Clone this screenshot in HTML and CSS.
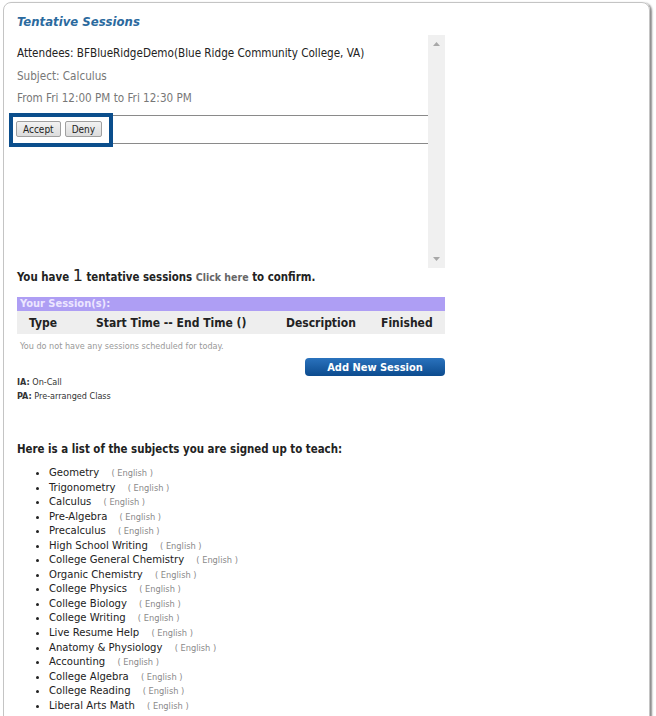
FILE: index.html
```html
<!DOCTYPE html>
<html>
<head>
<meta charset="utf-8">
<link rel="stylesheet" href="styles.css">
</head>
<body>
<div class="panel">
  <h2 class="title">Tentative Sessions</h2>
  <div class="scrollbox">
    <div class="sb-content">
      <div class="session">
        <p class="attendees">Attendees: BFBlueRidgeDemo(Blue Ridge Community College, VA)</p>
        <p class="meta">Subject: Calculus</p>
        <p class="meta">From Fri 12:00 PM to Fri 12:30 PM</p>
      </div>
      <div class="actions">
        <button class="btn">Accept</button>
        <button class="btn">Deny</button>
        <span class="highlight"></span>
      </div>
    </div>
    <div class="scrollbar">
      <svg class="arrow" width="7" height="4" viewBox="0 0 7 4"><path d="M0 4 L3.5 0 L7 4 Z" fill="#a8a8a8"/></svg>
      <svg class="arrow" width="7" height="4" viewBox="0 0 7 4"><path d="M0 0 L3.5 4 L7 0 Z" fill="#a8a8a8"/></svg>
    </div>
  </div>

  <div class="section">
    <p class="tentative">You have <span class="count">1</span> tentative sessions <a class="link">Click here</a> to confirm.</p>

    <div class="sessions">
      <div class="sessions-head">Your Session(s):</div>
      <div class="cols">
        <span class="c-type">Type</span>
        <span class="c-time">Start Time -- End Time ()</span>
        <span class="c-desc">Description</span>
        <span class="c-fin">Finished</span>
      </div>
      <p class="empty">You do not have any sessions scheduled for today.</p>
      <div class="add-row"><button class="add-btn">Add New Session</button></div>
    </div>

    <div class="legend">
      <p><b>IA:</b> On-Call</p>
      <p><b>PA:</b> Pre-arranged Class</p>
    </div>

    <p class="subjects-title">Here is a list of the subjects you are signed up to teach:</p>
    <ul class="subjects">
      <li>Geometry <span class="lang">( English )</span></li>
      <li>Trigonometry <span class="lang">( English )</span></li>
      <li>Calculus <span class="lang">( English )</span></li>
      <li>Pre-Algebra <span class="lang">( English )</span></li>
      <li>Precalculus <span class="lang">( English )</span></li>
      <li>High School Writing <span class="lang">( English )</span></li>
      <li>College General Chemistry <span class="lang">( English )</span></li>
      <li>Organic Chemistry <span class="lang">( English )</span></li>
      <li>College Physics <span class="lang">( English )</span></li>
      <li>College Biology <span class="lang">( English )</span></li>
      <li>College Writing <span class="lang">( English )</span></li>
      <li>Live Resume Help <span class="lang">( English )</span></li>
      <li>Anatomy &amp; Physiology <span class="lang">( English )</span></li>
      <li>Accounting <span class="lang">( English )</span></li>
      <li>College Algebra <span class="lang">( English )</span></li>
      <li>College Reading <span class="lang">( English )</span></li>
      <li>Liberal Arts Math <span class="lang">( English )</span></li>
    </ul>
  </div>
</div>
</body>
</html>
```

FILE: styles.css
```css
html, body {
  margin: 0;
  padding: 0;
  overflow: hidden;
  background: #ffffff;
}
body {
  font-family: "DejaVu Sans Condensed", "DejaVu Sans", sans-serif;
  color: #222;
}
p { margin: 0; }

.panel {
  margin: 2px 0 0 3px;
  width: 647px;
  height: 760px;
  border: 1px solid #c4c4c4;
  border-radius: 8px;
  box-shadow: 2px 1px 2px rgba(0,0,0,0.45);
  padding-left: 8px;
  box-sizing: border-box;
}

.title {
  margin: 0;
  padding: 11px 0 0 5px;
  height: 21px;
  font-size: 13px;
  font-weight: bold;
  font-style: italic;
  color: #2b6a9e;
  line-height: 16px;
}

.scrollbox {
  display: flex;
  width: 433px;
  height: 233px;
}
.sb-content {
  flex: 1;
}
.session {
  padding: 7px 0 5px 5px;
}
.session p {
  font-size: 11.6px;
  line-height: 22.5px;
}
.attendees { color: #222; }
.meta { color: #777; }

.actions {
  position: relative;
  display: flex;
  align-items: center;
  gap: 4px;
  height: 27px;
  padding-left: 4px;
  border-top: 1px solid #8a8a8a;
  border-bottom: 1px solid #8a8a8a;
}
.btn {
  height: 16px;
  padding: 0 6px;
  font-family: "DejaVu Sans Condensed", "DejaVu Sans", sans-serif;
  font-size: 10px;
  color: #222;
  background: linear-gradient(#f2f2f2, #dcdcdc);
  border: 1px solid #a0a0a0;
  border-radius: 2px;
}
.highlight {
  position: absolute;
  left: -3px;
  top: -3px;
  width: 104px;
  height: 34px;
  box-sizing: border-box;
  border: 4px solid #0b4e8c;
}

.scrollbar {
  width: 17px;
  background: #f0f0f0;
  display: flex;
  flex-direction: column;
  justify-content: space-between;
  align-items: center;
  padding: 7px 0 7px;
  box-sizing: border-box;
}

.section {
  padding-left: 5px;
  width: 428px;
}

.tentative {
  font-size: 11.4px;
  font-weight: bold;
  line-height: 16px;
  color: #222;
}
.count {
  font-size: 16px;
  font-weight: normal;
  font-family: "DejaVu Sans", sans-serif;
}
.link {
  color: #666;
  font-size: 10.5px;
}

.sessions {
  margin-top: 12px;
}
.sessions-head {
  height: 14px;
  line-height: 14px;
  background: #ae9ef4;
  color: #ece6ff;
  font-size: 11px;
  font-weight: bold;
  padding-left: 3px;
}
.cols {
  display: flex;
  align-items: center;
  height: 23px;
  background: #eeeeee;
  font-size: 12px;
  font-weight: bold;
  color: #222;
}
.c-type { margin-left: 12px; width: 67px; }
.c-time { width: 190px; }
.c-desc { width: 95px; }
.c-fin { }

.empty {
  font-size: 9px;
  color: #999;
  line-height: 12px;
  padding: 6px 0 0 3px;
}
.add-row {
  display: flex;
  justify-content: flex-end;
  margin-top: 6px;
}
.add-btn {
  width: 140px;
  height: 18px;
  border: none;
  border-radius: 4px;
  background: linear-gradient(#2a72bd, #0c4b8e);
  color: #fff;
  font-family: "DejaVu Sans Condensed", "DejaVu Sans", sans-serif;
  font-size: 11px;
  font-weight: bold;
  padding: 0;
}

.legend {
  margin-top: -1px;
  font-size: 9px;
  line-height: 14px;
  color: #333;
}

.subjects-title {
  margin-top: 38px;
  font-size: 11.4px;
  font-weight: bold;
  line-height: 16px;
}
.subjects {
  margin: 9px 0 0 0;
  padding-left: 32px;
  font-size: 11.2px;
  line-height: 14.55px;
  color: #222;
}
.lang {
  font-size: 9.2px;
  color: #8a8a8a;
  margin-left: 9px;
}
```
